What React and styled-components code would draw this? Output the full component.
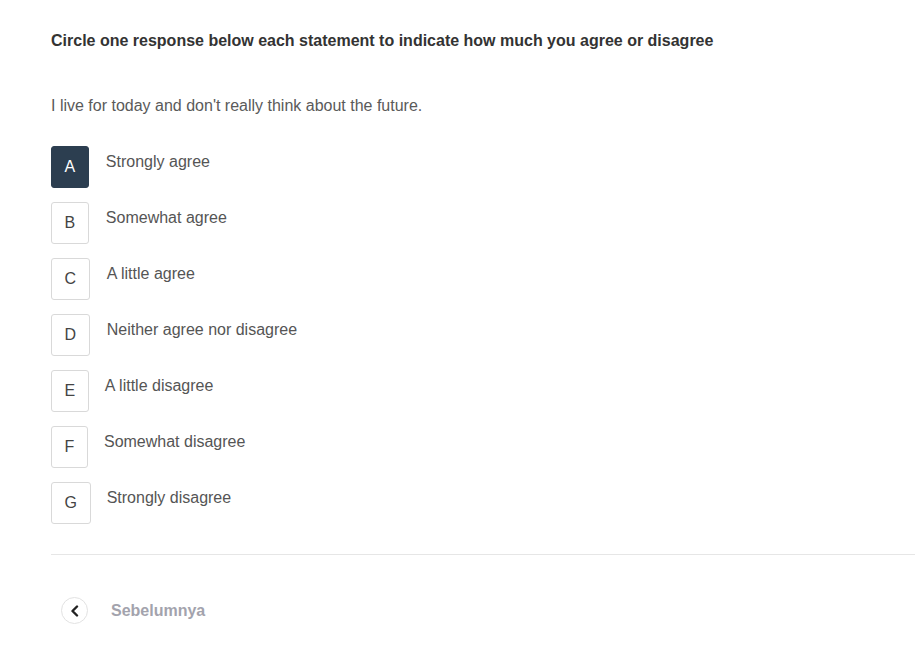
import React from "react";
import styled, { createGlobalStyle } from "styled-components";

const Global = createGlobalStyle`
  html, body { margin: 0; padding: 0; background: #fff; }
  body { font-family: "Liberation Sans", Arial, sans-serif; }
`;

const Page = styled.div`
  padding: 32px 0 0 51px;
`;

const Heading = styled.h2`
  margin: 0;
  font-size: 16px;
  line-height: 18px;
  font-weight: 700;
  color: #333;
`;

const Statement = styled.p`
  margin: 47px 0 0;
  font-size: 16px;
  line-height: 18px;
  color: #5a5a5a;
`;

const Options = styled.div`
  display: flex;
  flex-direction: column;
  gap: 14px;
  margin-top: 31px;
`;

const Option = styled.div`
  display: flex;
  align-items: flex-start;
  cursor: pointer;
`;

const LetterBox = styled.div`
  box-sizing: border-box;
  height: 42px;
  padding: 0 12.6px;
  display: flex;
  align-items: center;
  justify-content: center;
  font-size: 16px;
  border-radius: 3px;
  border: 1px solid ${(p) => (p.$active ? "#2c3e50" : "#d9d9d9")};
  background: ${(p) => (p.$active ? "#2c3e50" : "#fff")};
  color: ${(p) => (p.$active ? "#fff" : "#444")};
`;

const Label = styled.span`
  margin: 7px 0 0 ${(p) => p.$ml}px;
  font-size: 16px;
  line-height: 18px;
  color: #555;
`;

const Divider = styled.hr`
  border: 0;
  border-top: 1px solid #e6e6e6;
  margin: 30px 0 0;
`;

const Nav = styled.div`
  display: flex;
  align-items: center;
  margin: 42px 0 0 10px;
  gap: 23px;
`;

const BackButton = styled.button`
  box-sizing: border-box;
  width: 27px;
  height: 27px;
  border-radius: 50%;
  border: 1px solid #e2e2e2;
  background: #fff;
  display: flex;
  align-items: center;
  justify-content: center;
  padding: 0;
`;

const NavText = styled.span`
  font-size: 16px;
  font-weight: 700;
  color: #a3a3ad;
`;

const options = [
  ["A", "Strongly agree", 17, true],
  ["B", "Somewhat agree", 17],
  ["C", "A little agree", 17],
  ["D", "Neither agree nor disagree", 17],
  ["E", "A little disagree", 16],
  ["F", "Somewhat disagree", 16],
  ["G", "Strongly disagree", 16],
];

export default function App() {
  return (
    <>
      <Global />
      <Page>
        <Heading>Circle one response below each statement to indicate how much you agree or disagree</Heading>
        <Statement>I live for today and don't really think about the future.</Statement>
        <Options>
          {options.map(([l, t, ml, a]) => (
            <Option key={l}>
              <LetterBox $active={a}>{l}</LetterBox>
              <Label $ml={ml}>{t}</Label>
            </Option>
          ))}
        </Options>
        <Divider />
        <Nav>
          <BackButton aria-label="Sebelumnya">
            <svg width="10" height="12" viewBox="0 0 10 12">
              <path d="M7 1.5 L2.5 6 L7 10.5" fill="none" stroke="#222" strokeWidth="2.4" strokeLinecap="round" strokeLinejoin="round" />
            </svg>
          </BackButton>
          <NavText>Sebelumnya</NavText>
        </Nav>
      </Page>
    </>
  );
}
